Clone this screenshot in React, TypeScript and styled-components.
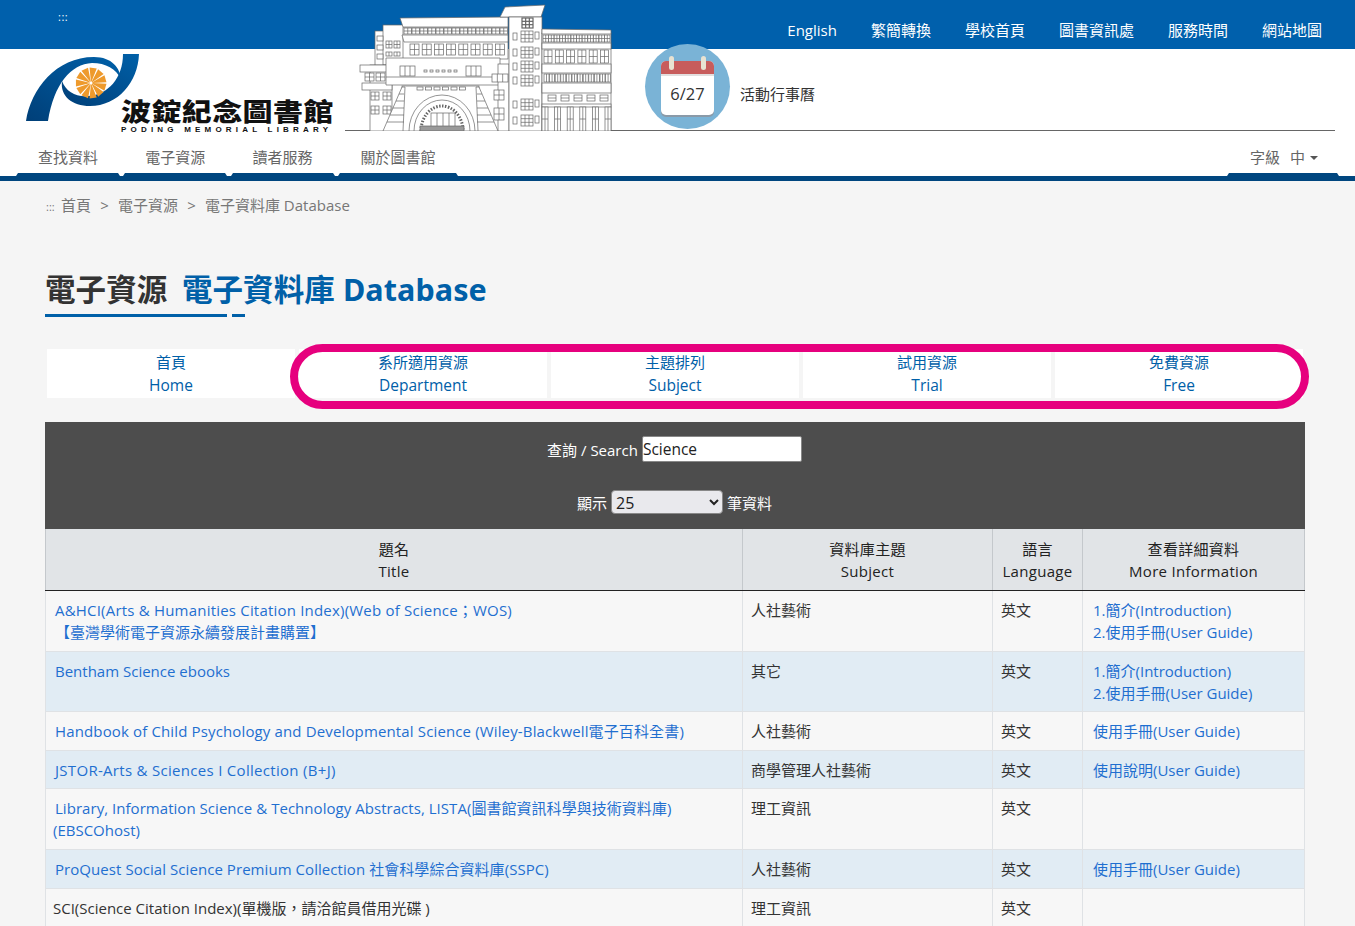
import styled, { createGlobalStyle } from 'styled-components';

const FONT = `"Open Sans", "Noto Sans CJK TC", sans-serif`;

const GlobalStyle = createGlobalStyle`
  html, body {
    margin: 0;
    padding: 0;
    background: #f5f5f5;
    font-family: ${FONT};
  }
  #root {
    height: 100vh;
    overflow: hidden;
  }
`;

/* -------- Header -------- */
const TopBar = styled.div`
  height: 49px;
  box-sizing: border-box;
  background: #0060ac;
  display: flex;
  justify-content: space-between;
  padding: 11px 33px 0 58px;
`;

const AccessKey = styled.a`
  color: #fff;
  font-size: 11px;
  line-height: 12px;
  letter-spacing: 0.5px;
`;

const TopLinks = styled.div`
  display: flex;
  gap: 34px;
  padding-top: 9px;
`;

const TopLink = styled.a`
  color: #fff;
  font-size: 15px;
  line-height: 20px;
`;

const MastHead = styled.div`
  height: 82px;
  background: #fff;
  display: flex;
  padding: 0 20px 0 26px;
`;

const LogoBox = styled.div`
  width: 319px;
  flex: none;
  display: flex;
  align-items: flex-start;
`;

const LogoMark = styled.svg`
  width: 114px;
  height: 70px;
  margin: 5px -19px 0 0;
  flex: none;
`;

const LogoText = styled.div`
  margin: 49px 0 0 0;
  width: 214px;
`;

const LogoName = styled.div`
  font-family: "Noto Sans CJK TC", sans-serif;
  font-weight: 900;
  font-size: 30px;
  line-height: 24px;
  letter-spacing: 0.4px;
  color: #111;
  white-space: nowrap;
  transform: scaleY(0.82);
`;

const LogoEnglish = styled.div`
  margin-top: 3px;
  font-family: "Liberation Sans", sans-serif;
  font-weight: 700;
  font-size: 8px;
  line-height: 9px;
  letter-spacing: 4.2px;
  color: #111;
  white-space: nowrap;
`;

const MastRight = styled.div`
  flex: 1;
  display: flex;
  align-items: flex-end;
  border-bottom: 1px solid #666;
`;

const Building = styled.svg`
  width: 260px;
  height: 131px;
  margin: -49px 0 0 10px;
  flex: none;
  align-self: flex-start;
  position: relative;
  fill: #fff;
  stroke: #666;
  stroke-width: 0.7;
`;

const CalendarLink = styled.a`
  display: flex;
  gap: 10px;
  margin: -5px 0 0 30px;
  align-self: flex-start;
  position: relative;
`;

const CalendarLabel = styled.span`
  margin-top: 40px;
  color: #333;
  font-size: 15px;
  line-height: 20px;
`;

const CalendarCircle = styled.div`
  width: 85px;
  height: 85px;
  border-radius: 50%;
  background: #7ab3d6;
  display: flex;
  align-items: center;
  justify-content: center;
`;

const CalendarCard = styled.div`
  width: 53px;
  height: 54px;
  margin-top: 2px;
  border-radius: 5px;
  background: #fff;
  box-shadow: 0 2px 0 #8a9aa8;
  position: relative;
  display: flex;
  flex-direction: column;
`;

const CalendarTop = styled.div`
  height: 13px;
  flex: none;
  background: #c75c5c;
  border-radius: 5px 5px 0 0;
  border-bottom: 2px solid #e2dede;
`;

const CalendarPeg = styled.span<{ side: 'left' | 'right' }>`
  position: absolute;
  top: -5px;
  ${props => props.side}: 8px;
  width: 5px;
  height: 14px;
  border-radius: 3px;
  background: #e8e2d2;
`;

const CalendarDate = styled.div`
  flex: 1;
  display: flex;
  align-items: center;
  justify-content: center;
  padding-bottom: 3px;
  font-size: 16.5px;
  color: #333;
`;

const NavRow = styled.div`
  height: 50px;
  box-sizing: border-box;
  background: #fff;
  display: flex;
  justify-content: space-between;
  align-items: flex-end;
  padding: 0 16px;
  border-bottom: 5px solid #00467f;
`;

const NavList = styled.div`
  display: flex;
  gap: 3.3px;
`;

const NavItem = styled.a<{ wide?: boolean }>`
  width: ${props => (props.wide ? '120px' : '104px')};
  height: 39px;
  box-sizing: border-box;
  padding-top: 10px;
  text-align: center;
  color: #666;
  font-size: 15px;
  line-height: 20px;
  border-bottom: 3px solid #00467f;
  border-left: 2px solid transparent;
  border-right: 2px solid transparent;
`;

const FontSize = styled.div`
  width: 112px;
  height: 39px;
  box-sizing: border-box;
  padding: 10px 0 0 21px;
  display: flex;
  gap: 10px;
  color: #666;
  font-size: 15px;
  line-height: 20px;
  border-bottom: 3px solid #00467f;
  border-left: 2px solid transparent;
  border-right: 2px solid transparent;
`;

const Caret = styled.span`
  display: inline-block;
  width: 0;
  height: 0;
  margin: 9px 0 0 -5px;
  border-style: solid;
  border-width: 4px 4px 0;
  border-color: #555 transparent transparent;
`;

/* -------- Page content -------- */
const Main = styled.main`
  width: 1260px;
  margin-left: 45px;
`;

const Breadcrumb = styled.div`
  padding-top: 14px;
  margin-left: 1px;
  color: #777;
  font-size: 15px;
  line-height: 20px;
  display: flex;
  gap: 9.2px;
`;

const DotMark = styled.span`
  display: inline-block;
  width: 15px;
  font-size: 11px;
`;

const Heading = styled.h1`
  margin: 50px 0 0;
  font-family: "Noto Sans", "Noto Sans CJK TC", sans-serif;
  font-weight: 700;
  font-size: 30.5px;
  line-height: 44px;
  letter-spacing: 0.1px;
  color: #333;
  white-space: nowrap;
`;

const HeadingSub = styled.span`
  color: #0060a8;
  margin-left: 14.5px;
`;

const HeadingRule = styled.div`
  display: flex;
  gap: 5px;
  margin-top: 3px;
`;

const RuleBar = styled.span<{ width: number }>`
  width: ${props => props.width}px;
  height: 3px;
  background: #0060a8;
`;

const TabNav = styled.nav`
  position: relative;
  margin-top: 32px;
  padding: 0 2px;
  display: grid;
  grid-template-columns: repeat(5, 1fr);
  gap: 4px;
`;

const Tab = styled.a`
  height: 49px;
  background: #fff;
  text-align: center;
  color: #0060a8;
  line-height: 23px;
  padding-top: 2px;
  box-sizing: border-box;
`;

const TabLine = styled.div<{ latin?: boolean }>`
  font-size: ${props => (props.latin ? '15.5px' : '15px')};
`;

const HighlightRing = styled.div`
  position: absolute;
  left: 245px;
  top: -5px;
  width: 1019px;
  height: 65px;
  box-sizing: border-box;
  border: 8px solid #e6007e;
  border-radius: 33px;
  pointer-events: none;
`;

const SearchPanel = styled.form`
  margin-top: 24px;
  height: 107px;
  box-sizing: border-box;
  padding-top: 14px;
  background: #4d4d4d;
  color: #fff;
  font-size: 15px;
`;

const PanelRow = styled.div<{ gapTop?: number }>`
  display: flex;
  justify-content: center;
  align-items: center;
  gap: 4px;
  margin-top: ${props => props.gapTop || 0}px;
  padding-right: 1px;
`;

const SearchInput = styled.input`
  width: 160px;
  height: 26px;
  box-sizing: border-box;
  padding: 0;
  border: 1px solid #888;
  border-radius: 2px;
  background: #fff;
  color: #222;
  font-family: ${FONT};
  font-size: 15.5px;
`;

const CountSelect = styled.select`
  width: 112px;
  height: 24px;
  box-sizing: border-box;
  padding: 0;
  border: 1px solid #888;
  border-radius: 4px;
  background: #e9e9ed;
  color: #222;
  font-family: ${FONT};
  font-size: 16px;
`;

/* -------- Table -------- */
const Table = styled.table`
  width: 1260px;
  table-layout: fixed;
  border-collapse: collapse;
  font-size: 15px;
  line-height: 22px;
  color: #333;
`;

const HeadCell = styled.th<{ width?: number }>`
  ${props => (props.width ? `width: ${props.width}px;` : '')}
  box-sizing: border-box;
  padding: 9px 8px 8px;
  background: #e1e4e7;
  border: 1px solid #c4c8cc;
  border-top: 0;
  border-bottom: 1px solid #222;
  font-weight: 400;
  letter-spacing: 0.3px;
  text-align: center;
  color: #222;
`;

const BodyRow = styled.tr<{ striped: boolean }>`
  background: ${props => (props.striped ? '#e1ecf4' : '#f7f7f7')};
`;

const Cell = styled.td`
  padding: 8px 8px 7.6px;
  border: 1px solid #dfe2e5;
  vertical-align: top;
`;

const TitleCell = styled(Cell)`
  padding-left: 7px;
`;

const TableLink = styled.a<{ track?: number }>`
  padding: 0 2px;
  color: #1f6fd0;
  letter-spacing: ${props => props.track || 0}px;
`;

const TailLink = styled.a`
  color: #1f6fd0;
`;

const GuideLink = styled.a`
  display: block;
  padding: 0 2px;
  color: #1f6fd0;
`;

/* -------- Drawings -------- */
function Win({ x, y, w, h, cols = 1, rows = 1 }: { x: number; y: number; w: number; h: number; cols?: number; rows?: number }) {
  const lines = [];
  for (let i = 1; i < cols; i++) {
    lines.push(<line key={`c${i}`} x1={x + (w * i) / cols} y1={y} x2={x + (w * i) / cols} y2={y + h} />);
  }
  for (let i = 1; i < rows; i++) {
    lines.push(<line key={`r${i}`} x1={x} y1={y + (h * i) / rows} x2={x + w} y2={y + (h * i) / rows} />);
  }
  return (
    <g>
      <rect x={x} y={y} width={w} height={h} />
      {lines}
    </g>
  );
}

function WinRow({ x, y, w, h, n, step, cols = 2, rows = 1 }: { x: number; y: number; w: number; h: number; n: number; step: number; cols?: number; rows?: number }) {
  return (
    <g>
      {Array.from({ length: n }, (_, i) => (
        <Win key={i} x={x + i * step} y={y} w={w} h={h} cols={cols} rows={rows} />
      ))}
    </g>
  );
}

function BuildingArt() {
  const towerY = [31, 47, 61, 75, 99, 115];
  return (
    <Building viewBox="355 0 260 131">
      {/* back left wing */}
      <rect x="375" y="31" width="12" height="35" />
      <rect x="383" y="25" width="22" height="40" />
      <WinRow x={377} y={36} w={6} h={5} n={1} step={0} cols={1} rows={1} />
      <WinRow x={377} y={45} w={6} h={5} n={1} step={0} cols={1} rows={1} />
      <WinRow x={377} y={54} w={6} h={5} n={1} step={0} cols={1} rows={1} />
      <WinRow x={386} y={41} w={6} h={7} n={2} step={8} cols={2} rows={2} />
      <WinRow x={386} y={52} w={6} h={4} n={2} step={8} cols={2} />
      {/* left lower wing */}
      <rect x="370" y="65" width="22" height="66" />
      <rect x="360" y="65" width="28" height="7" />
      <WinRow x={365} y={73} w={9} h={8} n={2} step={11} cols={2} rows={2} />
      <rect x="362" y="83" width="30" height="7" />
      <WinRow x={371} y={92} w={8} h={8} n={2} step={12} cols={2} rows={2} />
      <WinRow x={371} y={106} w={8} h={8} n={2} step={12} cols={2} rows={2} />
      {/* central block */}
      <rect x="403" y="27" width="105" height="32" />
      <path d="M400 18 L508 17 L508 27 L403 27 Z" />
      <WinRow x={404} y={28} w={7.5} h={6} n={13} step={8} cols={2} rows={2} />
      <path d="M402 35 L508 35 L508 42 L404 42 Z" />
      <WinRow x={410} y={44} w={9} h={11} n={8} step={12.2} cols={2} rows={2} />
      <path d="M386 58 L500 58 L500 85 L386 85 Z" />
      <line x1="386" y1="77" x2="500" y2="77" />
      <WinRow x={400} y={66} w={15} h={10} n={1} step={0} cols={3} />
      <WinRow x={466} y={66} w={15} h={10} n={1} step={0} cols={3} />
      <WinRow x={424} y={70} w={3} h={2} n={6} step={6} cols={1} />
      <rect x="498" y="64" width="11" height="67" />
      <WinRow x={492} y={74} w={16} h={8} n={1} step={0} cols={3} />
      <WinRow x={494} y={90} w={10} h={10} n={1} step={0} cols={2} rows={2} />
      <WinRow x={494} y={108} w={10} h={12} n={1} step={0} cols={2} rows={2} />
      {/* gate */}
      <rect x="402" y="86" width="77" height="45" />
      <path d="M402 87 L383 131 L403 131 L405 87 Z" />
      <path d="M479 87 L498 131 L478 131 L476 87 Z" />
      {[94, 101, 108, 115, 122].map(y => (
        <g key={y}>
          <line x1={402 - (y - 87) * 0.43} y1={y} x2={404} y2={y} />
          <line x1={479 + (y - 87) * 0.43} y1={y} x2={477} y2={y} />
        </g>
      ))}
      <WinRow x={417} y={87} w={6} h={3} n={6} step={8.5} cols={1} />
      <path d="M409 131 A33 36 0 0 1 475 131" fill="none" />
      <path d="M414 131 A28 31 0 0 1 470 131" fill="none" />
      <path d="M421 131 A21 25 0 0 1 463 131" fill="none" strokeWidth="3" strokeDasharray="1.5 1.5" />
      <rect x="431" y="113" width="24" height="14" />
      <line x1="437" y1="113" x2="437" y2="127" />
      <line x1="443" y1="113" x2="443" y2="127" />
      <line x1="449" y1="113" x2="449" y2="127" />
      <rect x="420" y="126" width="44" height="5" fill="#999" />
      {/* tower */}
      <path d="M500 17 L505 7 L545 5 L541 17 Z" />
      <rect x="509" y="17" width="33" height="114" />
      <g strokeWidth="1.2">
        <Win x={522} y={18} w={11} h={10} cols={3} rows={3} />
      </g>
      {towerY.map(y => (
        <g key={y}>
          <rect x="513" y={y + 2} width="4" height="7" />
          <Win x={521} y={y} w={12} h={11} cols={3} rows={3} />
          <rect x="535" y={y + 1} width="4" height="7" />
        </g>
      ))}
      {/* right wing */}
      <rect x="542" y="33" width="69" height="98" />
      <path d="M542 29 L611 30 L611 34 L542 34 Z" />
      <WinRow x={543} y={35} w={5.4} h={7} n={12} step={5.6} cols={2} rows={2} />
      <rect x="542" y="43" width="69" height="6" />
      <WinRow x={544} y={50} w={8} h={13} n={6} step={11.3} cols={2} rows={2} />
      <rect x="542" y="64" width="69" height="9" />
      <WinRow x={544} y={74} w={5} h={8} n={12} step={5.6} cols={2} />
      <rect x="542" y="83" width="69" height="10" />
      <WinRow x={548} y={95} w={8} h={6} n={5} step={13} cols={1} rows={2} />
      <rect x="542" y="104" width="69" height="3" />
      <WinRow x={542} y={107} w={6} h={24} n={6} step={12.6} cols={2} rows={2} />
    </Building>
  );
}

function LogoArt() {
  const wedges = Array.from({ length: 11 }, (_, i) => {
    const a0 = (i * 2 * Math.PI) / 11 + 0.05;
    const a1 = ((i + 1) * 2 * Math.PI) / 11 - 0.05;
    const cx = 65;
    const cy = 29;
    const r = 15.5;
    const inner = 1.5;
    return `M${cx + inner * Math.cos(a0)} ${cy + inner * Math.sin(a0)} L${cx + r * Math.cos(a0)} ${cy + r * Math.sin(a0)} L${cx + r * Math.cos(a1)} ${cy + r * Math.sin(a1)} L${cx + inner * Math.cos(a1)} ${cy + inner * Math.sin(a1)} Z`;
  });
  return (
    <LogoMark viewBox="0 0 114 70">
      <defs>
        <linearGradient id="arcFill" x1="0" y1="1" x2="1" y2="0">
          <stop offset="0" stopColor="#003f78" />
          <stop offset="1" stopColor="#0060a8" />
        </linearGradient>
      </defs>
      <path d="M0 67 C5 35 30 3 68 3 C86 3 94 14 95 25 C90 15 80 9 66 9 C45 10 28 30 22 67 Z" fill="url(#arcFill)" />
      <path d="M97 0 L113 0 C112 28 92 52 64 52 C46 52 34 42 36 27 C40 38 50 43 62 42 C82 41 97 24 97 0 Z" fill="url(#arcFill)" />
      {wedges.map(d => (
        <path key={d} d={d} fill="#ee9a2c" />
      ))}
    </LogoMark>
  );
}

/* -------- Data -------- */
interface Row {
  title: string[];
  plain?: boolean;
  tail?: string;
  track?: number;
  subject: string;
  guides: string[];
}

const ROWS: Row[] = [
  {
    title: ['A&HCI(Arts & Humanities Citation Index)(Web of Science；WOS)', '【臺灣學術電子資源永續發展計畫購置】'],
    track: 0.2,
    subject: '人社藝術',
    guides: ['1.簡介(Introduction)', '2.使用手冊(User Guide)'],
  },
  {
    title: ['Bentham Science ebooks'],
    subject: '其它',
    guides: ['1.簡介(Introduction)', '2.使用手冊(User Guide)'],
  },
  {
    title: ['Handbook of Child Psychology and Developmental Science (Wiley-Blackwell電子百科全書)'],
    track: 0.14,
    subject: '人社藝術',
    guides: ['使用手冊(User Guide)'],
  },
  {
    title: ['JSTOR-Arts & Sciences I Collection (B+J)'],
    track: 0.3,
    subject: '商學管理人社藝術',
    guides: ['使用說明(User Guide)'],
  },
  {
    title: ['Library, Information Science & Technology Abstracts, LISTA(圖書館資訊科學與技術資料庫)'],
    tail: '(EBSCOhost)',
    track: 0.04,
    subject: '理工資訊',
    guides: [],
  },
  {
    title: ['ProQuest Social Science Premium Collection 社會科學綜合資料庫(SSPC)'],
    track: 0.06,
    subject: '人社藝術',
    guides: ['使用手冊(User Guide)'],
  },
  {
    title: ['SCI(Science Citation Index)(單機版，請洽館員借用光碟 )'],
    plain: true,
    subject: '理工資訊',
    guides: [],
  },
];

const TOP_LINKS = ['English', '繁簡轉換', '學校首頁', '圖書資訊處', '服務時間', '網站地圖'];
const NAV_ITEMS = ['查找資料', '電子資源', '讀者服務', '關於圖書館'];
const TABS = [
  ['首頁', 'Home'],
  ['系所適用資源', 'Department'],
  ['主題排列', 'Subject'],
  ['試用資源', 'Trial'],
  ['免費資源', 'Free'],
];

function App() {
  return (
    <>
      <GlobalStyle />
      <header>
        <TopBar>
          <AccessKey>:::</AccessKey>
          <TopLinks>
            {TOP_LINKS.map(label => (
              <TopLink key={label}>{label}</TopLink>
            ))}
          </TopLinks>
        </TopBar>
        <MastHead>
          <LogoBox>
            <LogoArt />
            <LogoText>
              <LogoName>波錠紀念圖書館</LogoName>
              <LogoEnglish>PODING MEMORIAL LIBRARY</LogoEnglish>
            </LogoText>
          </LogoBox>
          <MastRight>
            <BuildingArt />
            <CalendarLink>
              <CalendarCircle>
                <CalendarCard>
                  <CalendarPeg side="left" />
                  <CalendarPeg side="right" />
                  <CalendarTop />
                  <CalendarDate>6/27</CalendarDate>
                </CalendarCard>
              </CalendarCircle>
              <CalendarLabel>活動行事曆</CalendarLabel>
            </CalendarLink>
          </MastRight>
        </MastHead>
        <NavRow>
          <NavList>
            {NAV_ITEMS.map((label, i) => (
              <NavItem key={label} wide={i === 3}>{label}</NavItem>
            ))}
          </NavList>
          <FontSize>
            <span>字級</span>
            <span>中</span>
            <Caret />
          </FontSize>
        </NavRow>
      </header>
      <Main>
        <Breadcrumb>
          <span><DotMark>:::</DotMark>首頁</span>
          <span>&gt;</span>
          <span>電子資源</span>
          <span>&gt;</span>
          <span>電子資料庫 Database</span>
        </Breadcrumb>
        <Heading>
          電子資源<HeadingSub>電子資料庫 Database</HeadingSub>
        </Heading>
        <HeadingRule>
          <RuleBar width={182} />
          <RuleBar width={13} />
        </HeadingRule>
        <TabNav>
          {TABS.map(([zh, en]) => (
            <Tab key={en}>
              <TabLine>{zh}</TabLine>
              <TabLine latin>{en}</TabLine>
            </Tab>
          ))}
          <HighlightRing />
        </TabNav>
        <SearchPanel>
          <PanelRow>
            查詢 / Search
            <SearchInput defaultValue="Science" />
          </PanelRow>
          <PanelRow gapTop={28}>
            顯示
            <CountSelect defaultValue="25">
              <option>10</option>
              <option>25</option>
              <option>50</option>
            </CountSelect>
            筆資料
          </PanelRow>
        </SearchPanel>
        <Table>
          <thead>
            <tr>
              <HeadCell>題名<br />Title</HeadCell>
              <HeadCell width={250}>資料庫主題<br />Subject</HeadCell>
              <HeadCell width={90}>語言<br />Language</HeadCell>
              <HeadCell width={222}>查看詳細資料<br />More Information</HeadCell>
            </tr>
          </thead>
          <tbody>
            {ROWS.map((row, i) => (
              <BodyRow key={row.title[0]} striped={i % 2 === 1}>
                <TitleCell>
                  {row.plain
                    ? row.title[0]
                    : row.title.map((line, j) => (
                        <span key={line}>
                          {j > 0 && <br />}
                          <TableLink track={j === 0 ? row.track : 0}>{line}</TableLink>
                        </span>
                      ))}
                  {row.tail && <><br /><TailLink>{row.tail}</TailLink></>}
                </TitleCell>
                <Cell>{row.subject}</Cell>
                <Cell>英文</Cell>
                <Cell>
                  {row.guides.map(g => (
                    <GuideLink key={g}>{g}</GuideLink>
                  ))}
                </Cell>
              </BodyRow>
            ))}
          </tbody>
        </Table>
      </Main>
    </>
  );
}

export default App;
